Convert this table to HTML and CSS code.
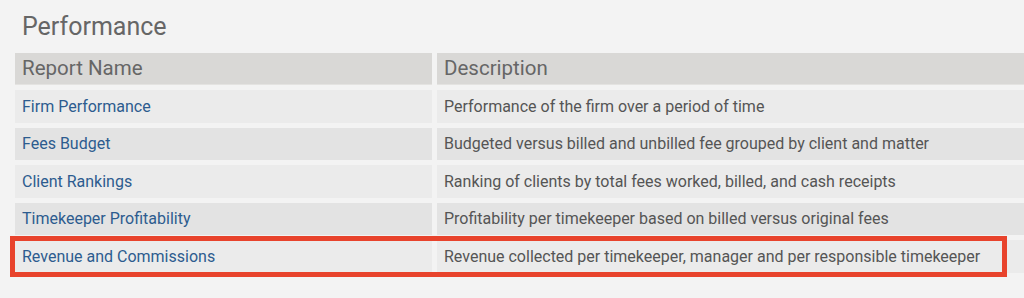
FILE: index.html
```html
<!DOCTYPE html>
<html>
<head>
<meta charset="utf-8">
<link rel="stylesheet" href="styles.css">
</head>
<body>
<div class="page">
  <h1 class="title">Performance</h1>
  <div class="table">
    <div class="cell head">Report Name</div>
    <div class="cell head">Description</div>
    <div class="cell odd link">Firm Performance</div>
    <div class="cell odd">Performance of the firm over a period of time</div>
    <div class="cell even link">Fees Budget</div>
    <div class="cell even">Budgeted versus billed and unbilled fee grouped by client and matter</div>
    <div class="cell odd link">Client Rankings</div>
    <div class="cell odd">Ranking of clients by total fees worked, billed, and cash receipts</div>
    <div class="cell even link">Timekeeper Profitability</div>
    <div class="cell even">Profitability per timekeeper based on billed versus original fees</div>
    <div class="cell odd link">Revenue and Commissions</div>
    <div class="cell odd">Revenue collected per timekeeper, manager and per responsible timekeeper</div>
  </div>
  <div class="highlight"></div>
</div>
</body>
</html>
```

FILE: styles.css
```css
html, body {
  margin: 0;
  padding: 0;
  background: #f3f3f3;
  font-family: Roboto, "Liberation Sans", Arial, sans-serif;
  overflow: hidden;
}
.page {
  position: relative;
  width: 1024px;
  height: 298px;
  padding-left: 15px;
  box-sizing: border-box;
}
.title {
  margin: 0;
  padding: 12px 0 0 7px;
  height: 41px;
  font-size: 25px;
  font-weight: 400;
  color: #666;
  line-height: 30px;
  box-sizing: border-box;
}
.table {
  margin-top: 12px;
  display: grid;
  grid-template-columns: 417px 600px;
  grid-template-rows: 32px repeat(5, 32.5px);
  column-gap: 5px;
  row-gap: 5px;
}
.cell {
  display: flex;
  align-items: center;
  padding-left: 7px;
  font-size: 16px;
  color: #555;
  white-space: nowrap;
}
.head {
  background: #d9d8d6;
  border-bottom: 1px solid #e4e3e1;
  font-size: 20.5px;
  color: #666;
  padding-bottom: 2px;
}
.odd { background: #ebebeb; }
.even { background: #e3e3e3; }
.link { color: #2d5c8f; }
.highlight {
  position: absolute;
  left: 10px;
  top: 236px;
  width: 997px;
  height: 41px;
  border: 5px solid #e8432c;
  box-sizing: border-box;
}
```
